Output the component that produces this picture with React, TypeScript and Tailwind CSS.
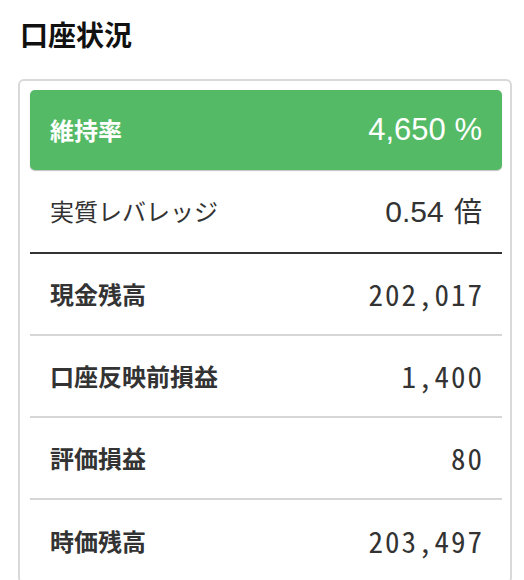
const rows = [
  { label: "現金残高", value: "202,017" },
  { label: "口座反映前損益", value: "1,400" },
  { label: "評価損益", value: "80" },
  { label: "時価残高", value: "203,497" },
];

const jp = "font-['Noto_Sans_CJK_JP',sans-serif]";
const mono = "font-['Noto_Sans_Mono_CJK_JP','DejaVu_Sans_Mono',monospace]";

export default function App() {
  return (
    <div className={`min-h-[580px] bg-white pl-[18px] pr-[12px] pt-[19px] ${jp}`}>
      <h1 className="ml-[2px] text-[28px] font-bold leading-[30px] text-[#111]">口座状況</h1>

      <div className="mt-[30px] rounded-[6px] border-2 border-[#d9d9d9] pl-[10px] pr-[8px] pt-[9px]">
        {/* maintenance rate */}
        <div className="flex h-[80px] items-center justify-between rounded-[5px] bg-[#55ba66] px-[20px] text-white shadow-[0_1px_1px_rgba(0,0,0,0.25)]">
          <span className="text-[24px] font-bold">維持率</span>
          <span className="font-['Liberation_Sans',sans-serif] text-[31px] font-normal">4,650 %</span>
        </div>

        <div className="flex h-[84px] items-center justify-between border-b-2 border-[#333] px-[20px] text-[#333]">
          <span className="text-[24px] font-normal">実質レバレッジ</span>
          <span className="text-[28px] font-normal">
            <span className="mr-[4px] font-['Liberation_Sans',sans-serif] text-[30px]">0.54</span> 倍
          </span>
        </div>

        {rows.map((row, i) => (
          <div
            key={row.label}
            className={`flex h-[82px] items-center justify-between px-[20px] text-[#333] ${
              i < rows.length - 1 ? "border-b-2 border-[#d6d6d6]" : ""
            }`}
          >
            <span className="text-[24px] font-bold">{row.label}</span>
            <span className={`${mono} mr-[-2px] text-[29px] tracking-[2px]`}>{row.value}</span>
          </div>
        ))}
      </div>
    </div>
  );
}
